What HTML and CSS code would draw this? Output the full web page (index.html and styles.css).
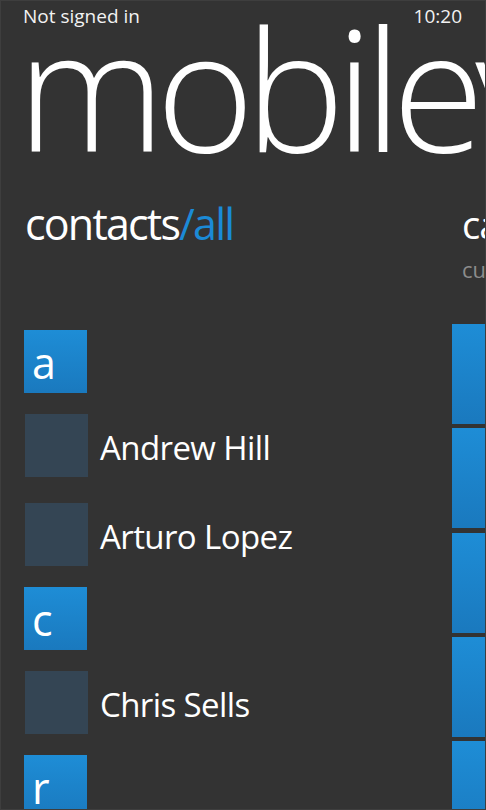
FILE: index.html
```html
<!DOCTYPE html>
<html lang="en">
<head>
<meta charset="utf-8">
<title>mobilevikings</title>
<link rel="stylesheet" href="styles.css">
</head>
<body>
<div class="phone">
  <div class="status">
    <span class="status-text">Not signed in</span>
    <span class="status-text">10:20</span>
  </div>
  <h1 class="title">mobilevikings</h1>
  <div class="panorama">
    <section class="pano-item pano-contacts">
      <h2 class="pano-header">contacts<span class="accent">/all</span></h2>
      <ul class="list">
        <li class="group"><span class="group-tile">a</span></li>
        <li class="contact contact-spaced"><span class="avatar"></span><span class="name">Andrew Hill</span></li>
        <li class="contact"><span class="avatar"></span><span class="name">Arturo Lopez</span></li>
        <li class="group"><span class="group-tile">c</span></li>
        <li class="contact"><span class="avatar"></span><span class="name">Chris Sells</span></li>
        <li class="group"><span class="group-tile">r</span></li>
      </ul>
    </section>
    <section class="pano-item pano-card">
      <h2 class="pano-header pano-header-small">card</h2>
      <p class="sub">current balance</p>
      <div class="tiles">
        <div class="tile"></div>
        <div class="tile"></div>
        <div class="tile"></div>
        <div class="tile"></div>
        <div class="tile"></div>
      </div>
    </section>
  </div>
</div>
</body>
</html>
```

FILE: styles.css
```css
html, body {
  margin: 0;
  padding: 0;
  background: #333333;
}

.phone {
  width: 486px;
  height: 810px;
  box-sizing: border-box;
  border: 1px solid #3e3e3e;
  background: #333333;
  overflow: hidden;
  color: #ffffff;
  font-family: "Open Sans", "Noto Sans", sans-serif;
}

.status {
  height: 31px;
  padding: 0 23px 0 22px;
  display: flex;
  justify-content: space-between;
  align-items: center;
}

.status-text {
  font-size: 19px;
  line-height: 31px;
  color: #f2f2f2;
}

.title {
  margin: 0 0 0 16px;
  font-size: 168px;
  line-height: 109px;
  font-weight: 300;
  white-space: nowrap;
  letter-spacing: -9.5px;
}

.panorama {
  display: flex;
  padding-left: 23px;
}

.pano-item {
  display: flex;
  flex-direction: column;
}

.pano-contacts {
  flex: 0 0 428px;
}

.pano-card {
  flex: 0 0 200px;
}

.pano-header {
  margin: 57px 0 0 1px;
  font-size: 43px;
  line-height: 52px;
  font-weight: 400;
  letter-spacing: -1.8px;
  white-space: nowrap;
}

.pano-header-small {
  margin: 60px 0 0 10px;
  font-size: 38px;
  line-height: 46px;
  letter-spacing: -1px;
}

.accent {
  color: #1b8ad6;
}

.sub {
  margin: 8px 0 0 10px;
  font-size: 22px;
  line-height: 28px;
  color: #8c8c8c;
  white-space: nowrap;
}

.list {
  list-style: none;
  margin: 80px 0 0 0;
  padding: 0;
  display: flex;
  flex-direction: column;
}

.group,
.contact {
  height: 63px;
  margin-bottom: 21px;
  display: flex;
  align-items: center;
}

.contact-spaced {
  margin-bottom: 26px;
}

.group-tile {
  width: 63px;
  height: 63px;
  box-sizing: border-box;
  padding: 0 0 9px 8px;
  background: linear-gradient(#1e8dd6, #1a79be);
  font-size: 43px;
  line-height: 1;
  display: flex;
  align-items: flex-end;
}

.avatar {
  width: 63px;
  height: 63px;
  margin-left: 1px;
  background: #344554;
  flex: 0 0 auto;
}

.name {
  margin: 4px 0 0 12px;
  font-size: 33px;
  letter-spacing: -0.6px;
  white-space: nowrap;
  color: #ffffff;
}

.tiles {
  margin-top: 41px;
  display: flex;
  flex-direction: column;
  gap: 4.3px;
}

.tile {
  width: 173px;
  height: 100px;
  background: linear-gradient(#1e8dd6, #1a79be);
}
```
